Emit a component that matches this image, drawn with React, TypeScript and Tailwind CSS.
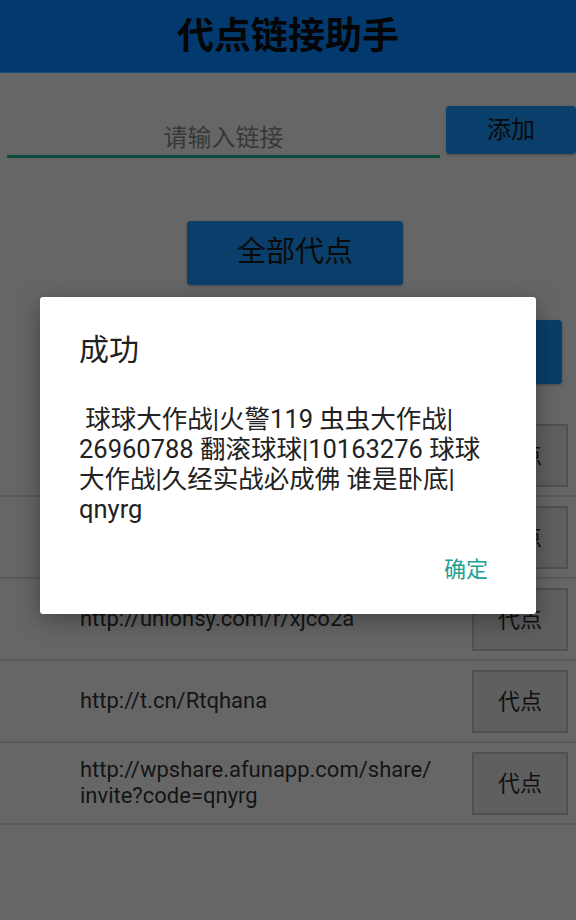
import React from "react";

const FONT = { fontFamily: "Roboto, 'Noto Sans CJK SC', sans-serif" };

const LINKS: { id: number; url: React.ReactNode }[] = [
  { id: 1, url: "http://m.example.com/s/abc" },
  { id: 2, url: "http://t.cn/Rtqxyz1" },
  { id: 3, url: "http://unionsy.com/r/xjco2a" },
  { id: 4, url: "http://t.cn/Rtqhana" },
  {
    id: 5,
    url: (
      <>
        http://wpshare.afunapp.com/share/
        <br />
        invite?code=qnyrg
      </>
    ),
  },
];

function LinkRow({ url }: { url: React.ReactNode }) {
  return (
    <div className="flex h-[82px] items-center border-b-2 border-[#595959] pl-[80px] pr-[8px]">
      <p className="flex-1 text-[22px] leading-[26px] text-[#141414]">{url}</p>
      <button className="flex h-[63px] w-[96px] items-center justify-center border-2 border-[#505050] bg-[#5f5f5f] text-[22px] text-[#111]">
        代点
      </button>
    </div>
  );
}

function SuccessDialog() {
  return (
    <div className="absolute left-[40px] top-[297px] w-[496px] rounded-[3px] bg-white shadow-[0_6px_24px_rgba(0,0,0,0.35)]">
      <div className="px-[39px] pt-[35px]">
        <h2 className="text-[30px] leading-[36px] text-[#212121]">成功</h2>
        <div className="mt-[36px] whitespace-nowrap text-[25.5px] leading-[30px] text-[#222]">
          <p>&nbsp;球球大作战|火警119 虫虫大作战|</p>
          <p>26960788 翻滚球球|10163276 球球</p>
          <p>大作战|久经实战必成佛 谁是卧底|</p>
          <p>qnyrg</p>
        </div>
      </div>
      <div className="flex justify-end px-[48px] pb-[31px] pt-[33px]">
        <button className="text-[22px] leading-[26px] text-[#22a193]">确定</button>
      </div>
    </div>
  );
}

export default function App() {
  return (
    <div className="relative h-[920px] w-[576px] overflow-hidden bg-[#666666]" style={FONT}>
      <header className="flex h-[73px] items-center justify-center border-b border-[#184c7e] bg-[#023a70]">
        <h1 className="text-[37px] font-bold leading-none text-[#050505]">代点链接助手</h1>
      </header>

      <div className="mt-[33px] flex items-start">
        <div className="ml-[7px] flex h-[52px] w-[433px] items-end justify-center border-b-[3px] border-[#0d4a40] pb-[2px]">
          <span className="text-[24px] leading-[30px] text-[#383838]">请输入链接</span>
        </div>
        <button className="ml-[6px] flex h-[48px] w-[130px] items-center justify-center rounded-[4px] bg-[#0a3e6b] text-[24px] text-[#0a0a0a] shadow-[0_1px_3px_rgba(0,0,0,0.3)]">
          添加
        </button>
      </div>

      <div className="mt-[63px] flex justify-center pl-[14px]">
        <button className="flex h-[64px] w-[216px] items-center justify-center rounded-[4px] bg-[#0a3e6b] text-[29px] text-[#0a0a0a] shadow-[0_1px_3px_rgba(0,0,0,0.3)]">
          全部代点
        </button>
      </div>

      <div className="mt-[35px] flex justify-end pr-[14px]">
        <button className="h-[64px] w-[216px] rounded-[4px] bg-[#0a3e6b] shadow-[0_1px_3px_rgba(0,0,0,0.3)]" />
      </div>

      <div className="mt-[31px]">
        {LINKS.map((l) => (
          <LinkRow key={l.id} url={l.url} />
        ))}
      </div>

      <SuccessDialog />
    </div>
  );
}
